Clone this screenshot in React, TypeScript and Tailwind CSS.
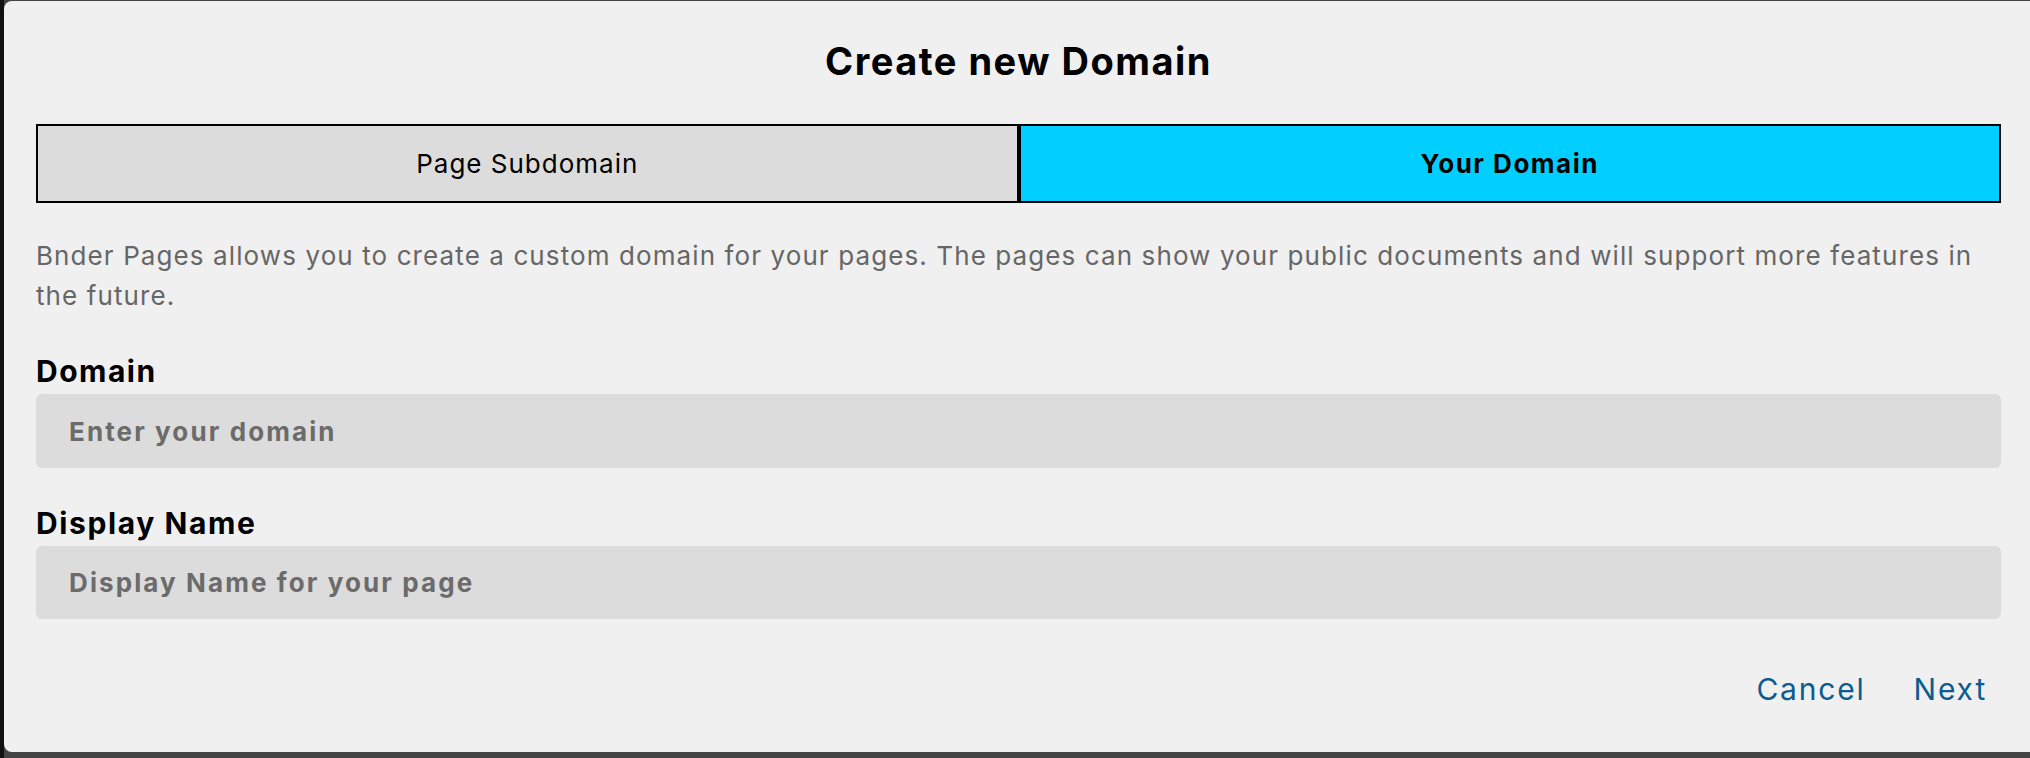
import { useState } from 'react'

const font = { fontFamily: 'Inter, "Noto Sans", sans-serif' }

export default function App() {
  const [tab, setTab] = useState<'sub' | 'own'>('own')

  return (
    <div className="w-full h-[758px] bg-[#444444] border-l-4 border-[#111111] pt-px pb-[6px] overflow-hidden" style={font}>
      <div className="h-full bg-[#f0f0f0] rounded-l-lg pl-8 pr-[29px] flex flex-col">
        <h1 className="text-[38px] font-bold text-black text-center leading-none mt-[41px] tracking-[1.5px]">Create new Domain</h1>

        <div className="flex mt-[44px] h-[79px]">
          <button
            onClick={() => setTab('sub')}
            className={`flex-1 border-2 border-black text-[26px] ${tab === 'sub' ? 'bg-[#00cfff] font-bold tracking-[1.5px]' : 'bg-[#dcdcdc] tracking-[1px]'}`}
          >
            Page Subdomain
          </button>
          <button
            onClick={() => setTab('own')}
            className={`flex-1 border-2 border-black text-[26px] ${tab === 'own' ? 'bg-[#00cfff] font-bold tracking-[1.5px]' : 'bg-[#dcdcdc] tracking-[1px]'}`}
          >
            Your Domain
          </button>
        </div>

        <p className="mt-[33px] text-[26px] leading-[40px] text-[#666666] tracking-[1.1px]">
          Bnder Pages allows you to create a custom domain for your pages. The pages can show your public documents and will support more features in the future.
        </p>

        <label className="mt-[37px] text-[30px] font-bold text-black leading-[36px] tracking-[1.5px]">Domain</label>
        <input
          placeholder="Enter your domain"
          className="mt-[5px] h-[74px] rounded-md bg-[#dcdcdc] px-[33px] text-[26px] font-bold text-black placeholder:text-[#6b6b6b] outline-none tracking-[2.1px]"
        />

        <label className="mt-[37px] text-[30px] font-bold text-black leading-[36px] tracking-[1.6px]">Display Name</label>
        <input
          placeholder="Display Name for your page"
          className="mt-[5px] h-[73px] rounded-md bg-[#dcdcdc] px-[33px] text-[26px] font-bold text-black placeholder:text-[#6b6b6b] outline-none tracking-[2.1px]"
        />

        <div className="mt-auto mb-[48px] flex justify-end gap-[48px] pr-[14px]">
          <button className="text-[30px] text-[#0b5c8f] tracking-[1.8px] leading-none">Cancel</button>
          <button className="text-[30px] text-[#0b5c8f] tracking-[1.8px] leading-none">Next</button>
        </div>
      </div>
    </div>
  )
}
